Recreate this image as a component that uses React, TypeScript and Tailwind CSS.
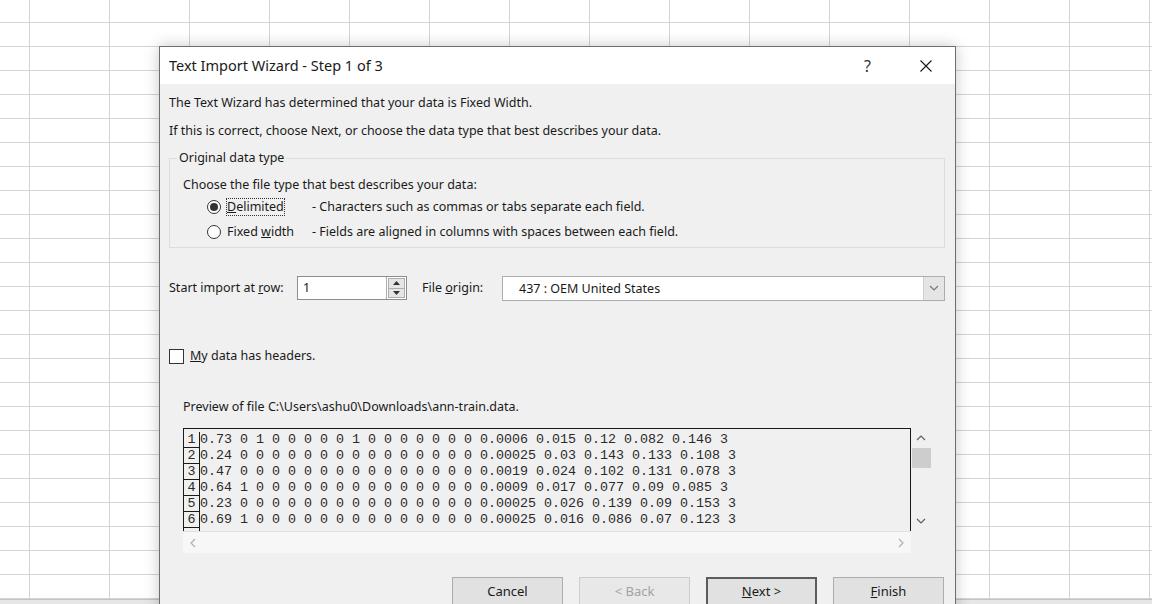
import React from 'react';

const PREVIEW_ROWS = [
  '0.73 0 1 0 0 0 0 0 1 0 0 0 0 0 0 0 0.0006 0.015 0.12 0.082 0.146 3',
  '0.24 0 0 0 0 0 0 0 0 0 0 0 0 0 0 0 0.00025 0.03 0.143 0.133 0.108 3',
  '0.47 0 0 0 0 0 0 0 0 0 0 0 0 0 0 0 0.0019 0.024 0.102 0.131 0.078 3',
  '0.64 1 0 0 0 0 0 0 0 0 0 0 0 0 0 0 0.0009 0.017 0.077 0.09 0.085 3',
  '0.23 0 0 0 0 0 0 0 0 0 0 0 0 0 0 0 0.00025 0.026 0.139 0.09 0.153 3',
  '0.69 1 0 0 0 0 0 0 0 0 0 0 0 0 0 0 0.00025 0.016 0.086 0.07 0.123 3',
];

const GRID_ROWS = Array.from({ length: 24 }, (_, i) => i);
const GRID_COLS = Array.from({ length: 14 }, (_, i) => i);

function SheetGrid() {
  return (
    <div className="flex flex-col bg-white">
      {[-1, ...GRID_ROWS].map((r) => (
        <div
          key={r}
          className={`flex border-b border-[#d4d4d4] ${r === -1 ? 'h-[23px]' : 'h-[24px]'}`}
        >
          <div className="w-[30px] shrink-0 border-r border-[#d4d4d4]" />
          {GRID_COLS.map((c) => (
            <div key={c} className="w-[80px] shrink-0 border-r border-[#d4d4d4]" />
          ))}
        </div>
      ))}
      <div className="h-[5px] border-t border-[#c4c4c4] bg-[#e6e6e6]" />
    </div>
  );
}

function Radio({ checked }: { checked: boolean }) {
  return (
    <span className="flex h-[14px] w-[14px] shrink-0 items-center justify-center rounded-full border border-[#333] bg-white">
      {checked && <span className="h-[8px] w-[8px] rounded-full bg-[#333]" />}
    </span>
  );
}

function Chevron({ dir }: { dir: 'up' | 'down' | 'left' | 'right' }) {
  const d = {
    up: 'M1 6 L5 2 L9 6',
    down: 'M1 2 L5 6 L9 2',
    left: 'M6 1 L2 5 L6 9',
    right: 'M2 1 L6 5 L2 9',
  }[dir];
  const vb = dir === 'up' || dir === 'down' ? '0 0 10 8' : '0 0 8 10';
  const size = dir === 'up' || dir === 'down' ? 'w-[10px] h-[8px]' : 'w-[8px] h-[10px]';
  return (
    <svg viewBox={vb} className={size} fill="none">
      <path d={d} stroke="currentColor" strokeWidth="1.2" />
    </svg>
  );
}

function Button({
  children,
  disabled,
  primary,
}: {
  children: React.ReactNode;
  disabled?: boolean;
  primary?: boolean;
}) {
  return (
    <button
      className={`flex h-[30px] w-[111px] items-center justify-center text-[13px] ${
        primary
          ? 'border-2 border-[#5c5c5c] bg-[#e1e1e1] text-[#1a1a1a]'
          : disabled
            ? 'border border-[#cccccc] bg-[#e8e8e8] text-[#a3a3a3]'
            : 'border border-[#adadad] bg-[#e1e1e1] text-[#1a1a1a]'
      }`}
    >
      {children}
    </button>
  );
}

function Dialog() {
  return (
    <div className="absolute left-[159px] top-[46px] w-[797px] h-[580px] border border-[#6e6e6e] bg-[#f0f0f0] shadow-[0_0_14px_rgba(0,0,0,0.22)] font-['Noto_Sans',sans-serif] text-[12.5px] text-[#1a1a1a]">
      {/* title bar */}
      <div className="flex h-[37px] items-center bg-white pl-[9px]">
        <span className="flex-1 text-[14.5px] text-[#1a1a1a]">Text Import Wizard - Step 1 of 3</span>
        <span className="mr-[49px] text-[16px] text-[#333]">?</span>
        <svg viewBox="0 0 12 12" className="mr-[23px] h-[12px] w-[12px]">
          <path d="M0.5 0.5 L11.5 11.5 M11.5 0.5 L0.5 11.5" stroke="#1a1a1a" strokeWidth="1.1" />
        </svg>
      </div>

      <div className="flex flex-col pl-[9px] pr-[10px] pt-[9px]">
        <div className="leading-[20px]">The Text Wizard has determined that your data is Fixed Width.</div>
        <div className="mt-[8px] leading-[20px]">
          If this is correct, choose Next, or choose the data type that best describes your data.
        </div>

        <fieldset className="mt-[7px] border border-[#dcdcdc] pb-[5px] pl-[13px]">
          <legend className="-ml-[6px] px-[2px] leading-[20px]">Original data type</legend>
          <div className="mt-[7px] leading-[20px]">Choose the file type that best describes your data:</div>
          <div className="ml-[24px] mt-[2px] flex h-[20px] items-center">
            <div className="flex w-[105px] items-center">
              <Radio checked />
              <span className="ml-[5px] border border-dotted border-[#333] leading-[16px]">
                <u>D</u>elimited
              </span>
            </div>
            <span>- Characters such as commas or tabs separate each field.</span>
          </div>
          <div className="ml-[24px] mt-[5px] flex h-[20px] items-center">
            <div className="flex w-[105px] items-center">
              <Radio checked={false} />
              <span className="ml-[6px]">
                Fixed <u>w</u>idth
              </span>
            </div>
            <span>- Fields are aligned in columns with spaces between each field.</span>
          </div>
        </fieldset>

        <div className="mt-[28px] flex h-[24px] items-center">
          <span className="w-[128px]">
            Start import at <u>r</u>ow:
          </span>
          <div className="flex h-[24px] w-[110px] border border-[#8c8c8c] bg-white">
            <span className="flex-1 pl-[5px] leading-[22px]">1</span>
            <div className="flex w-[20px] flex-col border-l border-[#adadad] p-px">
              <span className="flex flex-1 items-center justify-center border border-[#adadad] bg-[#e5e5e5]">
                <svg viewBox="0 0 7 4" className="h-[4px] w-[7px]">
                  <path d="M0 4 L3.5 0 L7 4 Z" fill="#333" />
                </svg>
              </span>
              <span className="flex flex-1 items-center justify-center border border-t-0 border-[#adadad] bg-[#e5e5e5]">
                <svg viewBox="0 0 7 4" className="h-[4px] w-[7px]">
                  <path d="M0 0 L3.5 4 L7 0 Z" fill="#333" />
                </svg>
              </span>
            </div>
          </div>
          <span className="ml-[15px] w-[80px]">
            File <u>o</u>rigin:
          </span>
          <div className="flex h-[25px] flex-1 border border-[#adadad] bg-white">
            <span className="flex-1 pl-[16px] leading-[23px]">437 : OEM United States</span>
            <span className="flex w-[21px] items-center justify-center border-l border-[#d0d0d0] bg-[#e5e5e5] text-[#777]">
              <Chevron dir="down" />
            </span>
          </div>
        </div>

        <div className="mt-[46px] flex h-[20px] items-center">
          <span className="h-[15px] w-[15px] border border-[#333] bg-white" />
          <span className="ml-[6px]">
            <u>M</u>y data has headers.
          </span>
        </div>

        <div className="ml-[14px] mt-[31px] leading-[20px]">
          Preview of file C:\Users\ashu0\Downloads\ann-train.data.
        </div>

        <div className="ml-[14px] mt-[11px] flex w-[748px] flex-col">
          <div className="flex h-[103px]">
            <div className="flex w-[728px] flex-col overflow-hidden border-l border-r border-t border-[#1a1a1a] bg-[#f0f0f0] pt-[3px] font-['Liberation_Mono',monospace] text-[13.33px] text-[#2a2a2a]">
              {PREVIEW_ROWS.map((row, i) => (
                <div key={i} className="flex h-[16px] shrink-0">
                  <span className="w-[16px] shrink-0 border-b border-r border-[#1a1a1a] text-center leading-[15px]">
                    {i + 1}
                  </span>
                  <span className="whitespace-pre leading-[15px]">{row}</span>
                </div>
              ))}
              <div className="h-[10px] w-[16px] shrink-0 border-r border-[#1a1a1a]" />
            </div>
            <div className="flex w-[20px] flex-col items-center text-[#606060]">
              <span className="flex h-[20px] items-center">
                <Chevron dir="up" />
              </span>
              <span className="h-[20px] w-[19px] bg-[#cdcdcd]" />
              <span className="flex-1" />
              <span className="flex h-[20px] items-center">
                <Chevron dir="down" />
              </span>
            </div>
          </div>
          <div className="flex h-[22px] w-[728px] items-center justify-between border-t border-[#e2e2e2] bg-[#f7f7f7] px-[6px] text-[#b0b0b0]">
            <Chevron dir="left" />
            <Chevron dir="right" />
          </div>
        </div>

        <div className="mr-[1px] mt-[24px] flex justify-end gap-[16px]">
          <Button>Cancel</Button>
          <Button disabled>&lt; Back</Button>
          <Button primary>
            <span>
              <u>N</u>ext &gt;
            </span>
          </Button>
          <Button>
            <span>
              <u>F</u>inish
            </span>
          </Button>
        </div>
      </div>
    </div>
  );
}

export default function App() {
  return (
    <div className="relative h-[604px] w-[1152px] overflow-hidden bg-white">
      <SheetGrid />
      <Dialog />
    </div>
  );
}
